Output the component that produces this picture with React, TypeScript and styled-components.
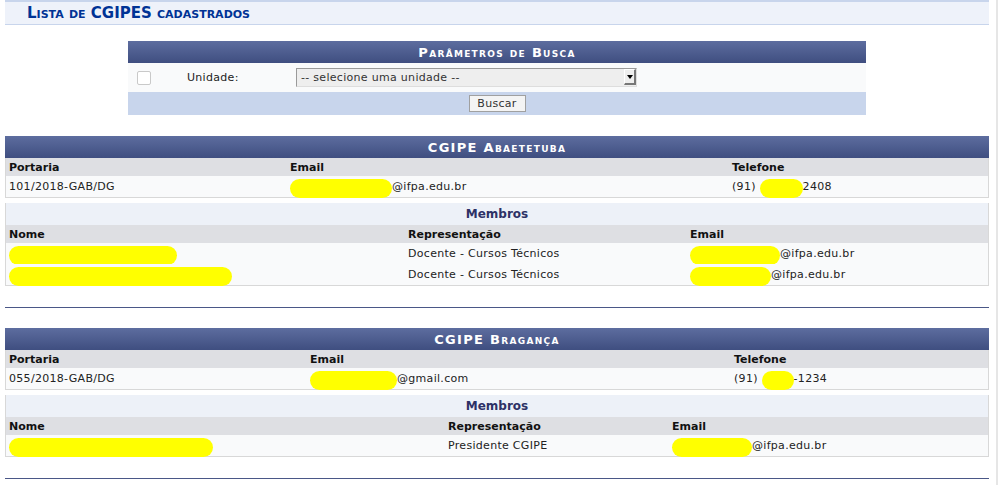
import React, { FunctionComponent } from 'react';
import styled, { createGlobalStyle } from 'styled-components';

const GlobalStyle = createGlobalStyle`
  html, body {
    margin: 0;
    padding: 0;
    background: #fff;
  }
  body {
    font-family: 'DejaVu Sans', Verdana, sans-serif;
    font-size: 11px;
    color: #222;
  }
`;

const Page = styled.div`
  width: 984px;
  padding: 0 7px 0 5px;
  border-right: 2px solid #e6e6e6;
  min-height: 485px;
  box-sizing: content-box;
  overflow: hidden;
`;

const TitleBar = styled.h2`
  margin: 0;
  border-top: 2px solid #c8d5ec;
  border-bottom: 1px solid #c8d5ec;
  background: #eef2fa;
  height: 22px;
  padding-left: 22px;
  display: flex;
  align-items: center;
  font-size: 15px;
  font-variant: small-caps;
  font-weight: bold;
  color: #003395;
`;

const SearchForm = styled.form`
  width: 738px;
  margin: 16px 0 21px 123px;
`;

const BarHeader = styled.div`
  height: 22px;
  background: linear-gradient(#5d6d9f, #3f4e80);
  color: #fff;
  font-weight: bold;
  font-variant: small-caps;
  font-size: 13px;
  letter-spacing: 1.3px;
  display: flex;
  align-items: center;
  justify-content: center;
  padding-top: 1px;
  box-sizing: border-box;
`;

const FormRow = styled.div`
  height: 29px;
  background: #f9fafb;
  display: flex;
  align-items: center;
  letter-spacing: 0.3px;
`;

const Check = styled.input`
  appearance: none;
  width: 14px;
  height: 14px;
  margin: 0 0 0 9px;
  border: 1px solid #c9c9c9;
  border-radius: 2px;
  background: #fff;
`;

const Label = styled.label`
  margin-left: 36px;
  width: 109px;
  color: #222;
`;

const SelectWrap = styled.div`
  position: relative;
  width: 341px;
  height: 19px;
`;

const Select = styled.select`
  appearance: none;
  width: 100%;
  height: 100%;
  margin: 0;
  padding: 0 0 0 4px;
  font-family: inherit;
  font-size: 11px;
  letter-spacing: 0.3px;
  color: #333;
  background: #eee;
  border: 1px solid #9a9a9a;
  border-right-color: #ddd;
  border-bottom-color: #ddd;
  border-radius: 0;
`;

const SelectArrow = styled.span`
  position: absolute;
  right: 1px;
  top: 1px;
  width: 12px;
  height: 16px;
  box-sizing: border-box;
  background: #eee;
  border-top: 1px solid #fff;
  border-left: 1px solid #fff;
  border-right: 2px solid #777;
  border-bottom: 2px solid #777;
  display: flex;
  align-items: center;
  justify-content: center;
  &::after {
    content: '';
    border-left: 3px solid transparent;
    border-right: 3px solid transparent;
    border-top: 4px solid #000;
  }
`;

const FormFooter = styled.div`
  height: 23px;
  background: #c8d5ec;
  display: flex;
  align-items: center;
  justify-content: center;
`;

const Button = styled.button`
  height: 17px;
  width: 57px;
  padding: 0;
  font-family: inherit;
  font-size: 11px;
  letter-spacing: 0.3px;
  color: #333;
  background: #f4f4f4;
  border: 1px solid #a0a0a0;
  border-radius: 0;
`;

const Section = styled.section`
  margin-top: 20px;
`;

const Grid = styled.div<{ cols: string }>`
  display: grid;
  grid-template-columns: ${(p) => p.cols};
`;

const HeadCell = styled.div`
  height: 18px;
  background: #dedfe3;
  font-weight: bold;
  padding-left: 3px;
  display: flex;
  align-items: center;
  color: #111;
`;

const DataCell = styled.div`
  height: 21px;
  background: #f9fafb;
  padding-left: 3px;
  display: flex;
  align-items: center;
  white-space: nowrap;
  letter-spacing: 0.3px;
`;

const InfoTable = styled.div`
  border: 1px solid #d8d8d8;
  border-top: none;
`;

const MembersTable = styled.div`
  margin-top: 5px;
  border: 1px solid #d8d8d8;
  border-top: none;
`;

const SubHeader = styled.div`
  height: 22px;
  background: #edf1f8;
  color: #2e3266;
  font-weight: bold;
  font-size: 12px;
  display: flex;
  align-items: center;
  justify-content: center;
`;

const Blob = styled.span<{ w: number }>`
  display: inline-block;
  width: ${(p) => p.w}px;
  height: 19px;
  border-radius: 10px;
  background: #ffff00;
  flex: none;
  margin-top: 4px;
`;

const Divider = styled.hr`
  margin: 21px 0 0;
  border: none;
  border-top: 1px solid #4a5787;
`;

interface Member {
  nome: number;
  rep: string;
  email: number;
  domain: string;
}

interface Cgipe {
  name: string;
  portaria: string;
  emailBlob: number;
  emailDomain: string;
  telBlob: number;
  telSuffix: string;
  infoCols: string;
  memberCols: string;
  members: Member[];
}

const cgipes: Cgipe[] = [
  {
    name: 'CGIPE Abaetetuba',
    portaria: '101/2018-GAB/DG',
    emailBlob: 102,
    emailDomain: '@ifpa.edu.br',
    telBlob: 43,
    telSuffix: '2408',
    infoCols: '281px 442px 1fr',
    memberCols: '399px 282px 1fr',
    members: [
      { nome: 168, rep: 'Docente - Cursos Técnicos', email: 90, domain: '@ifpa.edu.br' },
      { nome: 223, rep: 'Docente - Cursos Técnicos', email: 81, domain: '@ifpa.edu.br' },
    ],
  },
  {
    name: 'CGIPE Bragança',
    portaria: '055/2018-GAB/DG',
    emailBlob: 87,
    emailDomain: '@gmail.com',
    telBlob: 32,
    telSuffix: '-1234',
    infoCols: '301px 424px 1fr',
    memberCols: '439px 224px 1fr',
    members: [{ nome: 204, rep: 'Presidente CGIPE', email: 80, domain: '@ifpa.edu.br' }],
  },
];

const CgipeBlock: FunctionComponent<{ data: Cgipe }> = ({ data }) => (
  <Section>
    <BarHeader>{data.name}</BarHeader>
    <InfoTable>
      <Grid cols={data.infoCols}>
        <HeadCell>Portaria</HeadCell>
        <HeadCell>Email</HeadCell>
        <HeadCell>Telefone</HeadCell>
        <DataCell>{data.portaria}</DataCell>
        <DataCell>
          <Blob w={data.emailBlob} />
          {data.emailDomain}
        </DataCell>
        <DataCell>
          (91)&nbsp;
          <Blob w={data.telBlob} />
          {data.telSuffix}
        </DataCell>
      </Grid>
    </InfoTable>
    <MembersTable>
      <SubHeader>Membros</SubHeader>
      <Grid cols={data.memberCols}>
        <HeadCell>Nome</HeadCell>
        <HeadCell>Representação</HeadCell>
        <HeadCell>Email</HeadCell>
        {data.members.map((m, i) => (
          <React.Fragment key={i}>
            <DataCell>
              <Blob w={m.nome} />
            </DataCell>
            <DataCell>{m.rep}</DataCell>
            <DataCell>
              <Blob w={m.email} />
              {m.domain}
            </DataCell>
          </React.Fragment>
        ))}
      </Grid>
    </MembersTable>
    <Divider />
  </Section>
);

export default function App() {
  return (
    <>
      <GlobalStyle />
      <Page>
        <TitleBar>Lista de CGIPES cadastrados</TitleBar>
        <SearchForm onSubmit={(e) => e.preventDefault()}>
          <BarHeader>Parâmetros de Busca</BarHeader>
          <FormRow>
            <Check type="checkbox" />
            <Label>Unidade:</Label>
            <SelectWrap>
              <Select defaultValue="">
                <option value="">-- selecione uma unidade --</option>
              </Select>
              <SelectArrow />
            </SelectWrap>
          </FormRow>
          <FormFooter>
            <Button type="submit">Buscar</Button>
          </FormFooter>
        </SearchForm>
        {cgipes.map((c) => (
          <CgipeBlock key={c.name} data={c} />
        ))}
      </Page>
    </>
  );
}
